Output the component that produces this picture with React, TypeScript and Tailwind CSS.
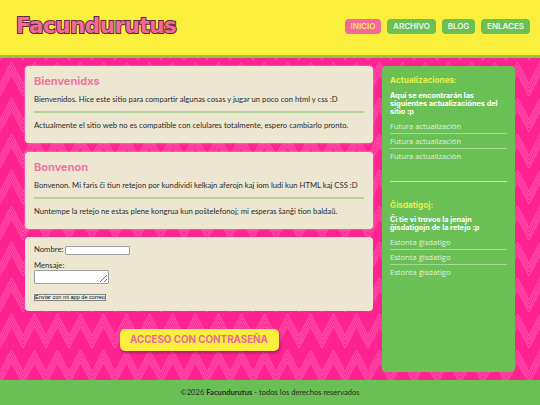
const updates = ['Futura actualización', 'Futura actualización', 'Futura actualización'];
const hints = ['Estonta ĝisdatigo', 'Estonta ĝisdatigo', 'Estonta ĝisdatigo'];
const navItems = ['ARCHIVO', 'BLOG', 'ENLACES'];

function ZigzagBackground() {
  return (
    <svg className="absolute inset-0 w-full h-full" aria-hidden="true">
      <defs>
        <pattern id="zigzag" width="23" height="36" patternUnits="userSpaceOnUse" y="4">
          <rect width="23" height="36" fill="#ff2391" />
          <g fill="none" stroke="#ff48a6" strokeWidth="1.3" strokeLinejoin="round">
            <path d="M0 22L11.5 0L23 22" />
            <path d="M0 26L11.5 4L23 26" />
            <path d="M0 30L11.5 8L23 30" />
            <path d="M0 34L11.5 12L23 34" />
            <path d="M0 -14L11.5 -36L23 -14" />
            <path d="M0 -10L11.5 -32L23 -10" />
            <path d="M0 -6L11.5 -28L23 -6" />
            <path d="M0 -2L11.5 -24L23 -2" />
          </g>
        </pattern>
      </defs>
      <rect width="100%" height="100%" fill="url(#zigzag)" />
    </svg>
  );
}

function SideList({ items }: { items: string[] }) {
  return (
    <ul>
      {items.map((item, i) => (
        <li
          key={i}
          className={`h-[15px] text-[7.6px] leading-[14px] text-[#e6f3dd] font-['Open_Sans',sans-serif] ${i < items.length - 1 ? 'border-b border-[#a5d995]' : ''}`}
        >
          {item}
        </li>
      ))}
    </ul>
  );
}

export default function App() {
  return (
    <div className="w-[540px] h-[405px] flex flex-col overflow-hidden font-['Lato',sans-serif] text-[#2b2b2b]">
      <header className="h-[58px] shrink-0 bg-[#fbef3e] border-b-[3px] border-[#8fc640] flex items-center justify-between pl-4 pr-[10px]">
        <h1 className="font-['DejaVu_Sans',sans-serif] text-[21.5px] font-bold tracking-[-0.5px] text-[#f5689b] [-webkit-text-stroke:2px_#5d2b3c] [paint-order:stroke] mb-[2px]">
          Facundurutus
        </h1>
        <nav className="flex gap-[6px] mb-[2px] font-['Inter',sans-serif]">
          <a className="w-[36px] h-[15px] text-center rounded bg-[#f5689b] text-[#fbef3e] text-[8px] font-semibold leading-[15px]">INICIO</a>
          {navItems.map((item) => (
            <a
              key={item}
              className={`${item === 'BLOG' ? 'w-[33px]' : 'w-[49px]'} h-[15px] text-center rounded bg-[#6abf55] text-[#f5f5e8] text-[8px] font-semibold leading-[15px]`}
            >
              {item}
            </a>
          ))}
        </nav>
      </header>

      <main className="relative flex-1 flex gap-[9px] pl-[25px] pt-2">
        <ZigzagBackground />
        <div className="relative w-[348px] flex flex-col">
          <section className="h-[77px] rounded bg-[#ede6d0] px-[9px] pt-[7px] shadow-[0_0_2px_#f9a8c9]">
            <h2 className="font-['Inter',sans-serif] text-[11px] font-bold text-[#f076a3] leading-[16px] mb-[4px]">Bienvenidxs</h2>
            <p className="text-[7.7px] leading-[12px] whitespace-nowrap">Bienvenidos. Hice este sitio para compartir algunas cosas y jugar un poco con html y css :D</p>
            <hr className="border-t-2 border-[#b3d59b] my-[6px]" />
            <p className="text-[7.7px] leading-[12px] whitespace-nowrap">Actualmente el sitio web no es compatible con celulares totalmente, espero cambiarlo pronto.</p>
          </section>
          <section className="h-[77px] mt-[9px] rounded bg-[#ede6d0] px-[9px] pt-[7px] shadow-[0_0_2px_#f9a8c9]">
            <h2 className="font-['Inter',sans-serif] text-[11px] font-bold text-[#f076a3] leading-[16px] mb-[4px]">Bonvenon</h2>
            <p className="text-[7.7px] leading-[12px] whitespace-nowrap">Bonvenon. Mi faris ĉi tiun retejon por kundividi kelkajn aferojn kaj iom ludi kun HTML kaj CSS :D</p>
            <hr className="border-t-2 border-[#b3d59b] my-[6px]" />
            <p className="text-[7.7px] leading-[12px] whitespace-nowrap">Nuntempe la retejo ne estas plene kongrua kun poŝtelefonoj; mi esperas ŝanĝi tion baldaŭ.</p>
          </section>
          <form className="h-[74px] mt-2 rounded bg-[#ede6d0] px-[9px] pt-[8px] text-[7.7px]">
            <div className="flex items-center h-[10px] gap-[2px]">
              <label>Nombre:</label>
              <input className="w-[65px] h-[9px] bg-white border border-[#a0a0a0] rounded-[1px]" />
            </div>
            <label className="block mt-[6px] leading-[9px]">Mensaje:</label>
            <textarea className="block w-[75px] h-[14px] bg-white border border-[#a0a0a0] rounded-[1px] resize" />
            <button type="button" className="block mt-[10px] h-[7px] w-[72px] bg-[#efefef] border border-[#808080] font-['Liberation_Sans',sans-serif] text-[5.6px] leading-[5px] text-black whitespace-nowrap">
              Enviar con mi app de correo
            </button>
          </form>
          <div className="flex justify-center mt-[18px]">
            <a className="w-[159px] h-[22px] rounded-[5px] bg-[#fbef3e] text-[#e8689a] font-['Inter',sans-serif] text-[9.8px] font-bold text-center leading-[21px] shadow-[1px_2px_3px_rgba(90,20,60,0.5)]">
              ACCESO CON CONTRASEÑA
            </a>
          </div>
        </div>

        <aside className="relative w-[133px] h-[306px] rounded bg-[#6abf55] px-[8px] pt-[8px]">
          <h3 className="font-['Inter',sans-serif] text-[8.2px] font-bold text-[#e6ef4a] leading-[12px] mb-[6px]">Actualizaciones:</h3>
          <p className="font-['Inter',sans-serif] text-[7.3px] font-bold text-white leading-[8px] mb-[3px]">Aquí se encontrarán las siguientes actualizaciónes del sitio :p</p>
          <SideList items={updates} />
          <div className="mt-[17px] mb-[17px] h-px bg-[#eef02f]" />
          <h3 className="font-['Inter',sans-serif] text-[8.2px] font-bold text-[#e6ef4a] leading-[12px] mb-[5px]">Ĝisdatigoj:</h3>
          <p className="font-['Inter',sans-serif] text-[7.3px] font-bold text-white leading-[8px] mb-[3px]">Ĉi tie vi trovos la jenajn ĝisdatigojn de la retejo :p</p>
          <SideList items={hints} />
        </aside>
      </main>

      <footer className="h-[25px] shrink-0 bg-[#6abf55] text-center text-[7.6px] leading-[25px]">
        ©2026 <b>Facundurutus</b> - todos los derechos reservados
      </footer>
    </div>
  );
}
